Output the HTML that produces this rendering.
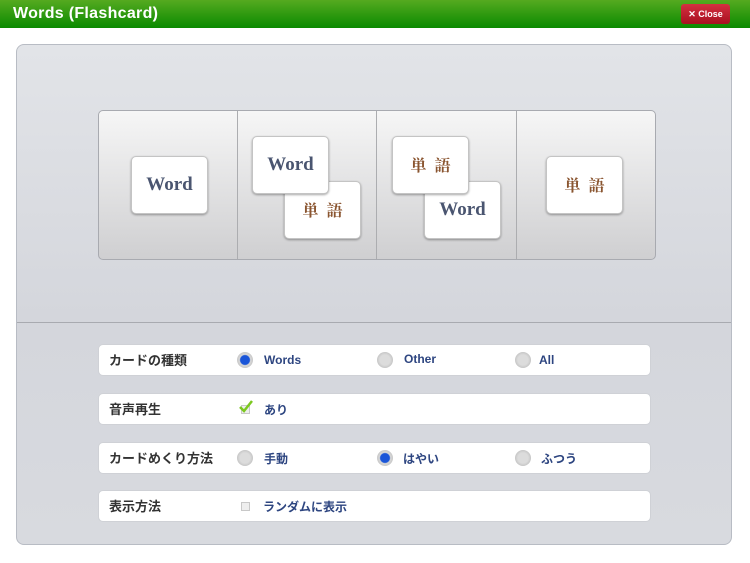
<!DOCTYPE html>
<html><head><meta charset="utf-8"><style>
*{margin:0;padding:0;box-sizing:border-box}
body{width:750px;height:563px;background:#fff;position:relative;overflow:hidden;font-family:"Liberation Sans","Noto Sans CJK JP",sans-serif}
.hdr{position:absolute;left:0;top:0;width:750px;height:28px;background:linear-gradient(#55aa20,#0a8a00);}
.hdr h1{position:absolute;left:13px;top:5px;color:#fff;font-size:16px;font-weight:bold;font-family:"Liberation Sans",sans-serif;letter-spacing:0.3px}
.close{position:absolute;left:681px;top:4px;width:49px;height:20px;background:linear-gradient(#d43040,#a81020);border-radius:3px;color:#fff;font-size:9px;font-weight:bold;text-align:center;line-height:20px}
.panel{position:absolute;left:16px;top:44px;width:716px;height:501px;border:1px solid #b8bcc4;border-radius:8px;background:linear-gradient(#e2e4e8,#d4d6dc 55%,#d8dadf);}
.div{position:absolute;left:0;top:277px;width:714px;height:1px;background:#a8aab0}
.strip{position:absolute;left:98px;top:110px;width:558px;height:150px;border:1px solid #a8aab0;border-radius:5px;background:linear-gradient(#f6f6f6,#cfcfd1);overflow:hidden}
.vl{position:absolute;top:0;width:1px;height:150px;background:#acadb0}
.card{position:absolute;width:77px;height:58px;background:#fff;border:1px solid #c4c4c4;border-radius:5px;box-shadow:0 1px 2px rgba(0,0,0,.35);text-align:center;line-height:56px;font-family:"Liberation Serif",serif;font-weight:bold;font-size:19px;color:#4a5570}
.card.j{font-family:"Noto Serif CJK SC",serif;color:#8a5530;font-size:16px;letter-spacing:8px;text-indent:8px}
.row{position:absolute;left:98px;width:553px;height:32px;background:#fff;border:1px solid #cfd1d6;border-radius:5px}
.lbl{position:absolute;left:10px;top:5px;font-size:13px;font-weight:bold;color:#333}
.opt{position:absolute;top:7px;font-size:12px;font-weight:bold;color:#2d4580}
.rad{position:absolute;top:7px;width:16px;height:16px;border-radius:50%;background:radial-gradient(#dcdcdc 45%,#c6c6c6 70%,#e0e0e0)}
.rad.on{background:radial-gradient(#1a55d8 40%,#d8d8d8 48%,#c8c8c8 70%,#e6e6e6)}
.chk{position:absolute;top:11px;width:9px;height:9px;border:1px solid #c8c8c8;background:#eee}
</style></head><body>
<div class="hdr"><h1>Words (Flashcard)</h1><div class="close">✕ Close</div></div>
<div class="panel"><div class="div"></div></div>
<div class="strip">
<div class="vl" style="left:138px"></div><div class="vl" style="left:277px"></div><div class="vl" style="left:417px"></div>
<div class="card" style="left:32px;top:45px">Word</div>
<div class="card j" style="left:185px;top:70px">単語</div>
<div class="card" style="left:153px;top:25px">Word</div>
<div class="card" style="left:325px;top:70px">Word</div>
<div class="card j" style="left:293px;top:25px">単語</div>
<div class="card j" style="left:447px;top:45px">単語</div>
</div>
<div class="row" style="top:344px"><div class="lbl">カードの種類</div>
<div class="rad on" style="left:138px"></div><div class="opt" style="left:165px;top:8px">Words</div>
<div class="rad" style="left:278px"></div><div class="opt" style="left:305px;top:7px">Other</div>
<div class="rad" style="left:416px"></div><div class="opt" style="left:440px;top:8px">All</div></div>
<div class="row" style="top:393px"><div class="lbl">音声再生</div>
<div class="chk" style="left:142px"></div><svg style="position:absolute;left:139px;top:5px" width="16" height="16" viewBox="0 0 16 16"><path d="M2 8 L6 12 L14 2" stroke="#7cc820" stroke-width="2.5" fill="none"/></svg><div class="opt" style="left:165px">あり</div></div>
<div class="row" style="top:442px"><div class="lbl">カードめくり方法</div>
<div class="rad" style="left:138px"></div><div class="opt" style="left:165px">手動</div>
<div class="rad on" style="left:278px"></div><div class="opt" style="left:304px">はやい</div>
<div class="rad" style="left:416px"></div><div class="opt" style="left:442px">ふつう</div></div>
<div class="row" style="top:490px"><div class="lbl">表示方法</div>
<div class="chk" style="left:142px"></div><div class="opt" style="left:164px">ランダムに表示</div></div>
</body></html>
